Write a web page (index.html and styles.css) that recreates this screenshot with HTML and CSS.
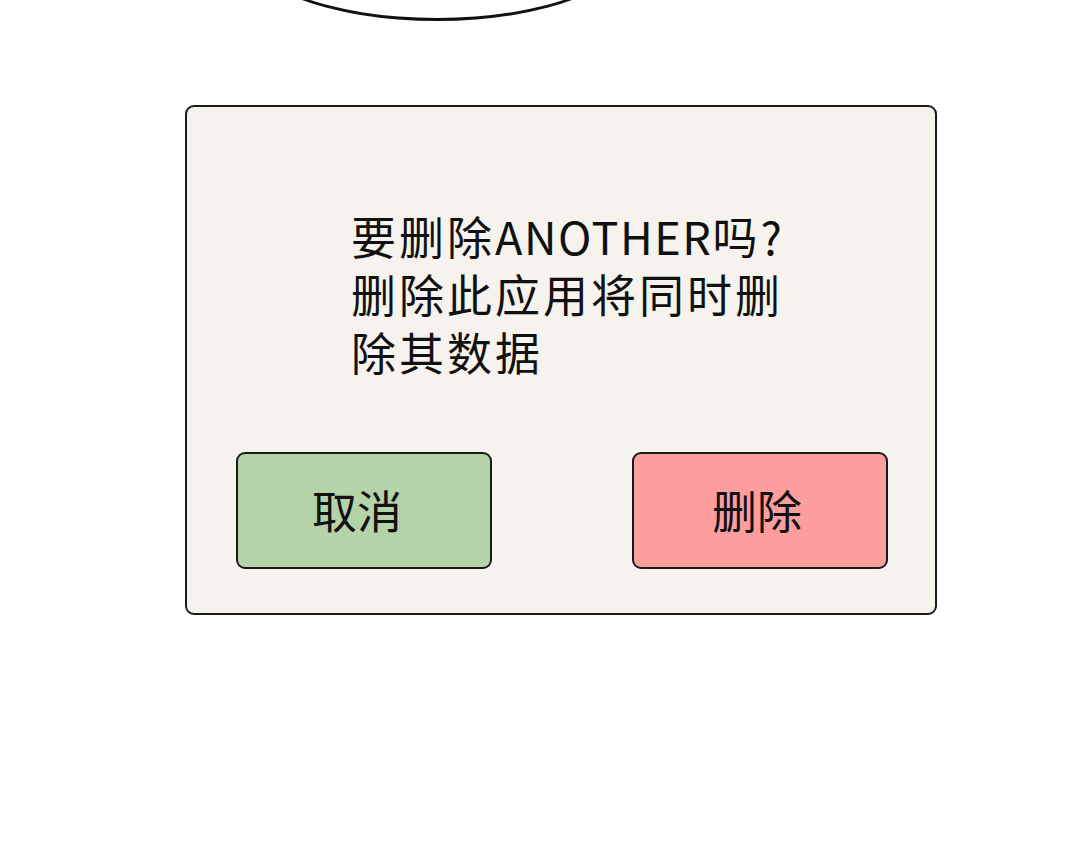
FILE: index.html
```html
<!DOCTYPE html>
<html lang="zh-CN">
  <head>
    <meta charset="UTF-8" />
    <title>删除应用</title>
    <link rel="stylesheet" href="styles.css">
  </head>
  <body>
    <!-- 上方对话气泡的一角 -->
    <div class="bubble"></div>

    <div class="page">
      <div class="dialog">
        <p class="message">要删除<span class="latin">ANOTHER</span>吗?删除此应用将同时删除其数据</p>
        <div class="actions">
          <button class="btn cancel" type="button">取消</button>
          <button class="btn delete" type="button">删除</button>
        </div>
      </div>
    </div>
  </body>
</html>
```

FILE: styles.css
```css
body {
  margin: 0;
  background-color: #ffffff;
  font-family: "Noto Sans CJK SC", "Noto Sans", sans-serif;
  color: #111;
  overflow: hidden;
}

.bubble {
  position: absolute;
  left: 237px;
  top: -139px;
  width: 400px;
  height: 160px;
  border: 3px solid #111;
  border-radius: 50%;
  box-sizing: border-box;
}

.page {
  padding: 105px 0 0 185px;
}

.dialog {
  width: 752px;
  height: 510px;
  box-sizing: border-box;
  border: 2px solid #1a1a1a;
  border-radius: 9px;
  background-color: #f6f3ee;
  padding: 100px 47px 44px 49px;
  display: flex;
  flex-direction: column;
  justify-content: space-between;
}

.message {
  margin: 0 0 0 115px;
  width: 460px;
  font-size: 45px;
  line-height: 58px;
  letter-spacing: 3px;
}

.latin {
  letter-spacing: 1.5px;
}

.actions {
  display: flex;
  justify-content: space-between;
}

.btn {
  width: 256px;
  height: 117px;
  border: 2px solid #1a1a1a;
  border-radius: 9px;
  font-family: inherit;
  font-size: 45px;
  color: #111;
  padding: 0 0 2px 0;
}

.cancel {
  background-color: #b4d3a8;
  padding-right: 14px;
}

.delete {
  background-color: #fc9e9e;
  padding-right: 6px;
}
```
